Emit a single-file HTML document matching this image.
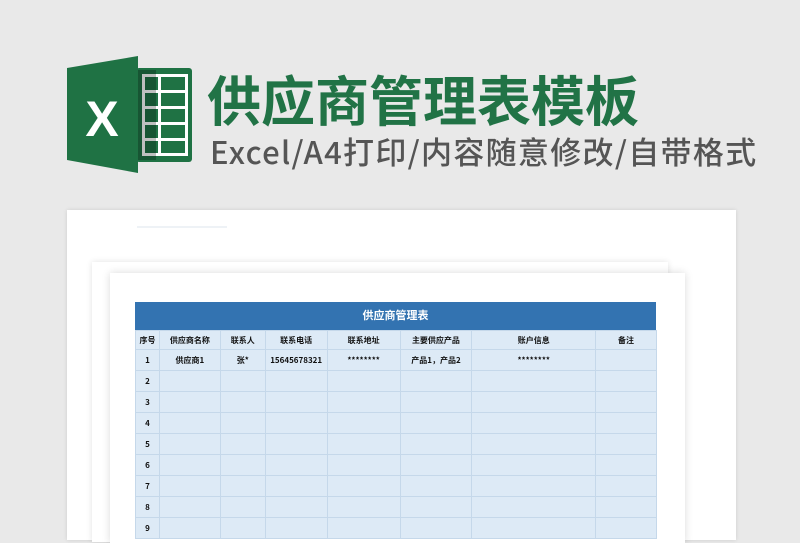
<!DOCTYPE html>
<html><head><meta charset="utf-8"><style>
body{margin:0;width:800px;height:526px;background:#e9e9e9;position:relative;overflow:hidden;font-family:"Liberation Sans","Noto Sans CJK SC",sans-serif}
.a{position:absolute}
.t1{left:207px;top:66px;font-size:54px;font-weight:bold;color:#217346;letter-spacing:0px;line-height:64px;white-space:nowrap;font-family:"Noto Sans CJK SC",sans-serif}
.t2{left:210px;top:131px;font-size:31px;color:#555;line-height:40px;white-space:nowrap;letter-spacing:1.3px;font-weight:500;font-family:"Noto Sans CJK SC",sans-serif}
.p{background:#fff}
table{border-collapse:collapse;font-size:8px;font-weight:bold;color:#111;font-family:"Noto Sans CJK SC",sans-serif}
td{border:1px solid #c5d8ea;background:#ddeaf6;height:20px;padding:0;text-align:center}
tr.h td{height:18px}
</style></head><body>
<svg class="a" style="left:66px;top:56px" width="128" height="118" viewBox="0 0 128 118">
<rect x="70" y="12" width="56" height="94" rx="3" fill="#1f7244"/>
<rect x="76" y="18" width="46" height="82" fill="#fff"/>
<g fill="#1f7244">
<rect x="79" y="21" width="13" height="13"/><rect x="95" y="21" width="24" height="13"/>
<rect x="79" y="37" width="13" height="13"/><rect x="95" y="37" width="24" height="13"/>
<rect x="79" y="53" width="13" height="13"/><rect x="95" y="53" width="24" height="13"/>
<rect x="79" y="69" width="13" height="13"/><rect x="95" y="69" width="24" height="13"/>
<rect x="79" y="85" width="13" height="12"/><rect x="95" y="85" width="24" height="12"/>
</g>
<rect x="72" y="14" width="18" height="90" fill="#000" opacity=".25"/>
<polygon points="1,12 72,0 72,117 1,104" fill="#1f7244"/>
<text x="36" y="80" font-family="Liberation Sans" font-weight="bold" font-size="50" fill="#fff" text-anchor="middle">X</text>
</svg>
<div class="a t1">供应商管理表模板</div>
<div class="a t2">Excel/A4打印/内容随意修改/自带格式</div>
<div class="a p" style="left:67px;top:210px;width:669px;height:330px;box-shadow:0 0 4px rgba(0,0,0,.12)"></div>
<div class="a" style="left:137px;top:226px;width:90px;height:2px;background:#eef2f6"></div>
<div class="a p" style="left:92px;top:262px;width:576px;height:280px;box-shadow:0 0 6px rgba(0,0,0,.12)"></div>
<div class="a p" style="left:110px;top:273px;width:575px;height:270px;box-shadow:0 0 8px rgba(0,0,0,.15)"></div>
<div class="a" style="left:135px;top:302px;width:521px;height:28px;background:#3373b1;color:#fff;font-weight:bold;font-size:11px;line-height:26px;text-align:center;font-family:'Noto Sans CJK SC',sans-serif">供应商管理表</div>
<table class="a" style="left:135px;top:330px;width:522px">
<colgroup><col style="width:24px"><col style="width:61px"><col style="width:45px"><col style="width:62px"><col style="width:73px"><col style="width:72px"><col style="width:124px"><col style="width:61px"></colgroup>
<tr class="h"><td>序号</td><td>供应商名称</td><td>联系人</td><td>联系电话</td><td>联系地址</td><td>主要供应产品</td><td>账户信息</td><td>备注</td></tr>
<tr><td>1</td><td>供应商1</td><td>张*</td><td>15645678321</td><td>********</td><td>产品1，产品2</td><td>********</td><td></td></tr>
<tr><td>2</td><td></td><td></td><td></td><td></td><td></td><td></td><td></td></tr>
<tr><td>3</td><td></td><td></td><td></td><td></td><td></td><td></td><td></td></tr>
<tr><td>4</td><td></td><td></td><td></td><td></td><td></td><td></td><td></td></tr>
<tr><td>5</td><td></td><td></td><td></td><td></td><td></td><td></td><td></td></tr>
<tr><td>6</td><td></td><td></td><td></td><td></td><td></td><td></td><td></td></tr>
<tr><td>7</td><td></td><td></td><td></td><td></td><td></td><td></td><td></td></tr>
<tr><td>8</td><td></td><td></td><td></td><td></td><td></td><td></td><td></td></tr>
<tr><td>9</td><td></td><td></td><td></td><td></td><td></td><td></td><td></td></tr>
</table>
</body></html>
